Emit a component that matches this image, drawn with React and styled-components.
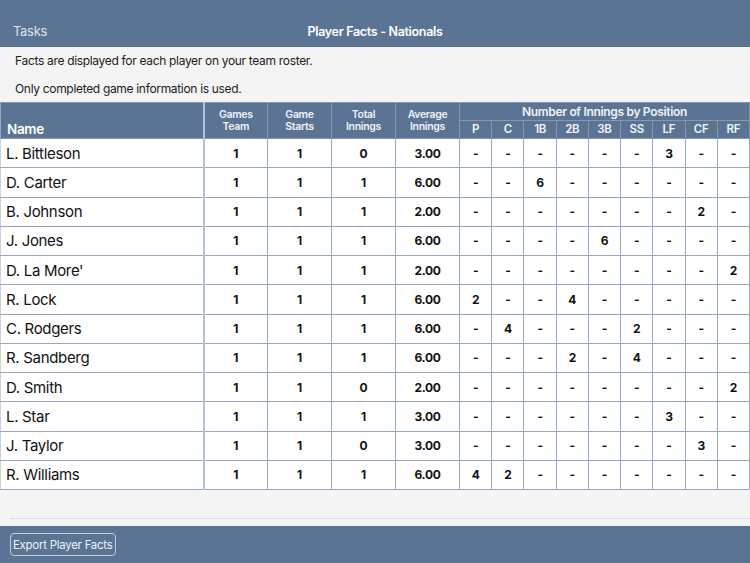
import React from "react";
import styled, { createGlobalStyle } from "styled-components";

const GlobalStyle = createGlobalStyle`
  html, body {
    margin: 0;
    padding: 0;
    background: #f4f4f4;
    font-family: Inter, "Liberation Sans", sans-serif;
  }
`;

const positions = ["P", "C", "1B", "2B", "3B", "SS", "LF", "CF", "RF"];

const players = [
  { name: "L. Bittleson", team: 1, starts: 1, total: 0, avg: "3.00", pos: { LF: 3 } },
  { name: "D. Carter", team: 1, starts: 1, total: 1, avg: "6.00", pos: { "1B": 6 } },
  { name: "B. Johnson", team: 1, starts: 1, total: 1, avg: "2.00", pos: { CF: 2 } },
  { name: "J. Jones", team: 1, starts: 1, total: 1, avg: "6.00", pos: { "3B": 6 } },
  { name: "D. La More'", team: 1, starts: 1, total: 1, avg: "2.00", pos: { RF: 2 } },
  { name: "R. Lock", team: 1, starts: 1, total: 1, avg: "6.00", pos: { P: 2, "2B": 4 } },
  { name: "C. Rodgers", team: 1, starts: 1, total: 1, avg: "6.00", pos: { C: 4, SS: 2 } },
  { name: "R. Sandberg", team: 1, starts: 1, total: 1, avg: "6.00", pos: { "2B": 2, SS: 4 } },
  { name: "D. Smith", team: 1, starts: 1, total: 0, avg: "2.00", pos: { RF: 2 } },
  { name: "L. Star", team: 1, starts: 1, total: 1, avg: "3.00", pos: { LF: 3 } },
  { name: "J. Taylor", team: 1, starts: 1, total: 0, avg: "3.00", pos: { CF: 3 } },
  { name: "R. Williams", team: 1, starts: 1, total: 1, avg: "6.00", pos: { P: 4, C: 2 } },
];

const App = () => {
  return (
    <Page>
      <GlobalStyle />
      <TopBar>
        <BackLink>Tasks</BackLink>
        <Title>Player Facts - Nationals</Title>
      </TopBar>
      <Note>Facts are displayed for each player on your team roster.</Note>
      <Note>Only completed game information is used.</Note>
      <Table>
        <colgroup>
          <col style={{ width: 203 }} />
          <col style={{ width: 64 }} />
          <col style={{ width: 64 }} />
          <col style={{ width: 64 }} />
          <col style={{ width: 64 }} />
          {positions.map((p) => (
            <col key={p} />
          ))}
        </colgroup>
        <thead>
          <tr>
            <NameHead rowSpan={2}>Name</NameHead>
            <StatHead rowSpan={2}>Games<br />Team</StatHead>
            <StatHead rowSpan={2}>Game<br />Starts</StatHead>
            <StatHead rowSpan={2}>Total<br />Innings</StatHead>
            <StatHead rowSpan={2}>Average<br />Innings</StatHead>
            <GroupHead colSpan={9}>Number of Innings by Position</GroupHead>
          </tr>
          <tr>
            {positions.map((p) => (
              <PosHead key={p}>{p}</PosHead>
            ))}
          </tr>
        </thead>
        <tbody>
          {players.map((pl) => (
            <Row key={pl.name}>
              <NameCell>{pl.name}</NameCell>
              <NumCell>{pl.team}</NumCell>
              <NumCell>{pl.starts}</NumCell>
              <NumCell>{pl.total}</NumCell>
              <NumCell>{pl.avg}</NumCell>
              {positions.map((p) => (
                <NumCell key={p}>{pl.pos[p] ? pl.pos[p] : "-"}</NumCell>
              ))}
            </Row>
          ))}
        </tbody>
      </Table>
      <Spacer />
      <Divider />
      <BottomBar>
        <ExportButton>Export Player Facts</ExportButton>
      </BottomBar>
    </Page>
  );
};
export default App;

const Page = styled.div`
  width: 750px;
  height: 563px;
  display: flex;
  flex-direction: column;
  background: #f4f4f4;
  overflow: hidden;
  letter-spacing: -0.02em;
`;
const TopBar = styled.div`
  height: 47px;
  flex-shrink: 0;
  background: #5b7494;
  position: relative;
  display: flex;
  align-items: flex-end;
  justify-content: center;
  padding-bottom: 8px;
  box-sizing: border-box;
`;
const BackLink = styled.div`
  position: absolute;
  left: 13px;
  bottom: 8px;
  font-size: 13px;
  color: #dbe2eb;
`;
const Title = styled.div`
  font-size: 12.5px;
  font-weight: 600;
  color: #ffffff;
`;
const Note = styled.div`
  font-size: 12px;
  color: #1c1c1c;
  padding-left: 15px;
  height: 28px;
  line-height: 28px;
`;
const Table = styled.table`
  width: 750px;
  table-layout: fixed;
  border-collapse: collapse;
  flex-shrink: 0;
  margin-top: -1px;
`;
const HeadBase = styled.th`
  background: #5b7494;
  color: #eef2f7;
  font-weight: 600;
  padding: 0;
  border: 1px solid #8597b3;
`;
const NameHead = styled(HeadBase)`
  text-align: left;
  vertical-align: bottom;
  font-size: 13.5px;
  color: #ffffff;
  padding: 0 0 1px 6px;
  border-right: 2px solid #b4c0d4;
  border-left: 1px solid #9aaac2;
`;
const StatHead = styled(HeadBase)`
  font-size: 10.5px;
  line-height: 12.5px;
  vertical-align: middle;
  padding-top: 1px;
`;
const GroupHead = styled(HeadBase)`
  font-size: 12px;
  height: 17px;
  line-height: 17px;
`;
const PosHead = styled(HeadBase)`
  font-size: 11.5px;
  height: 17px;
  line-height: 17px;
`;
const Row = styled.tr`
  height: 29.25px;
  background: #ffffff;
`;
const NameCell = styled.td`
  font-size: 15px;
  color: #111111;
  padding: 0 0 0 5px;
  border: 1px solid #98a6c4;
  border-right: 2px solid #b4c0d4;
  border-left: 1px solid #c9d1e0;
  white-space: nowrap;
`;
const NumCell = styled.td`
  font-size: 12px;
  font-weight: 700;
  color: #111111;
  text-align: center;
  padding: 0;
  border: 1px solid #98a6c4;
`;
const Spacer = styled.div`
  flex: 1;
`;
const Divider = styled.div`
  height: 1px;
  margin: 0 0 7px 10px;
  background: #dcdcdc;
`;
const BottomBar = styled.div`
  height: 37px;
  flex-shrink: 0;
  background: #5b7494;
  display: flex;
  align-items: center;
  padding-left: 10px;
  box-sizing: border-box;
`;
const ExportButton = styled.button`
  font-family: Inter, "Liberation Sans", sans-serif;
  font-size: 11.4px;
  letter-spacing: -0.02em;
  color: #eef2f7;
  background: transparent;
  border: 1px solid #c2cddb;
  border-radius: 4px;
  height: 23px;
  padding: 0 2px;
  white-space: nowrap;
`;
